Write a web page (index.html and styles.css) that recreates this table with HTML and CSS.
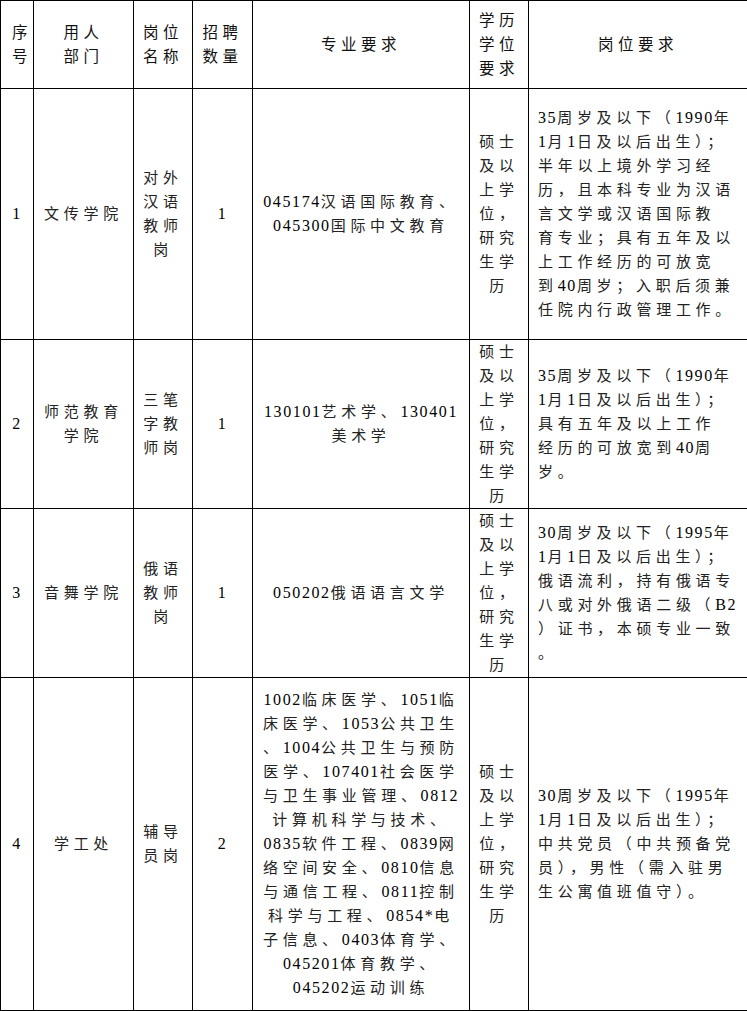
FILE: index.html
```html
<!DOCTYPE html>
<html lang="zh-CN">
<head>
<meta charset="utf-8">
<title>招聘岗位表</title>
<link rel="stylesheet" href="styles.css">
</head>
<body>
<table class="jobs">
  <colgroup>
    <col class="c-no"><col class="c-dept"><col class="c-post"><col class="c-num"><col class="c-major"><col class="c-edu"><col class="c-req">
  </colgroup>
  <thead>
    <tr class="r-head">
      <th class="th-first">序<br>号</th>
      <th>用人<br>部门</th>
      <th>岗位<br>名称</th>
      <th>招聘<br>数量</th>
      <th>专业要求</th>
      <th>学历<br>学位<br>要求</th>
      <th>岗位要求</th>
    </tr>
  </thead>
  <tbody>
    <tr class="r1">
      <td><span class="n">1</span></td>
      <td>文传学院</td>
      <td>对外<br>汉语<br>教师<br>岗</td>
      <td><span class="n">1</span></td>
      <td><span class="n">045174</span>汉语国际教育、<br><span class="n">045300</span>国际中文教育</td>
      <td>硕士<br>及以<br>上学<br>位，<br>研究<br>生学<br>历</td>
      <td class="req"><span class="n">35</span>周岁及以下（<span class="n">1990</span>年<br><span class="n">1</span>月<span class="n">1</span>日及以后出生）；<br>半年以上境外学习经<br>历，且本科专业为汉语<br>言文学或汉语国际教<br>育专业；具有五年及以<br>上工作经历的可放宽<br>到<span class="n">40</span>周岁；入职后须兼<br>任院内行政管理工作。</td>
    </tr>
    <tr class="r2">
      <td><span class="n">2</span></td>
      <td>师范教育<br>学院</td>
      <td>三笔<br>字教<br>师岗</td>
      <td><span class="n">1</span></td>
      <td><span class="n">130101</span>艺术学、<span class="n">130401</span><br>美术学</td>
      <td>硕士<br>及以<br>上学<br>位，<br>研究<br>生学<br>历</td>
      <td class="req"><span class="n">35</span>周岁及以下（<span class="n">1990</span>年<br><span class="n">1</span>月<span class="n">1</span>日及以后出生）；<br>具有五年及以上工作<br>经历的可放宽到<span class="n">40</span>周<br>岁。</td>
    </tr>
    <tr class="r3">
      <td><span class="n">3</span></td>
      <td>音舞学院</td>
      <td>俄语<br>教师<br>岗</td>
      <td><span class="n">1</span></td>
      <td><span class="n">050202</span>俄语语言文学</td>
      <td>硕士<br>及以<br>上学<br>位，<br>研究<br>生学<br>历</td>
      <td class="req"><span class="n">30</span>周岁及以下（<span class="n">1995</span>年<br><span class="n">1</span>月<span class="n">1</span>日及以后出生）；<br>俄语流利，持有俄语专<br>八或对外俄语二级（<span class="n">B2</span><br>）证书，本硕专业一致<br>。</td>
    </tr>
    <tr class="r4">
      <td><span class="n">4</span></td>
      <td>学工处</td>
      <td>辅导<br>员岗</td>
      <td><span class="n">2</span></td>
      <td><span class="n">1002</span>临床医学、<span class="n">1051</span>临<br>床医学、<span class="n">1053</span>公共卫生<br>、<span class="n">1004</span>公共卫生与预防<br>医学、<span class="n">107401</span>社会医学<br>与卫生事业管理、<span class="n">0812</span><br>计算机科学与技术、<br><span class="n">0835</span>软件工程、<span class="n">0839</span>网<br>络空间安全、<span class="n">0810</span>信息<br>与通信工程、<span class="n">0811</span>控制<br>科学与工程、<span class="n">0854*</span>电<br>子信息、<span class="n">0403</span>体育学、<br><span class="n">045201</span>体育教学、<br><span class="n">045202</span>运动训练</td>
      <td>硕士<br>及以<br>上学<br>位，<br>研究<br>生学<br>历</td>
      <td class="req"><span class="n">30</span>周岁及以下（<span class="n">1995</span>年<br><span class="n">1</span>月<span class="n">1</span>日及以后出生）；<br>中共党员（中共预备党<br>员），男性（需入驻男<br>生公寓值班值守）。</td>
    </tr>
  </tbody>
</table>
</body>
</html>
```

FILE: styles.css
```css
html, body {
  margin: 0;
  padding: 0;
  background: #ffffff;
}

.jobs {
  border-collapse: collapse;
  table-layout: fixed;
  width: 747px;
  font-family: "Liberation Serif", "Noto Sans CJK SC", serif;
  font-size: 15px;
  line-height: 24px;
  color: #222222;
}

.c-no { width: 33px; }
.c-dept { width: 100px; }
.c-post { width: 59px; }
.c-num { width: 60px; }
.c-major { width: 217px; }
.c-edu { width: 59px; }
.c-req { width: 219px; }

.jobs th,
.jobs td {
  border: 1px solid #000000;
  padding: 0;
  text-align: center;
  vertical-align: middle;
  white-space: nowrap;
  letter-spacing: 4.7px;
  font-weight: normal;
  overflow: hidden;
}

.jobs th {
  color: #111111;
  font-size: 15.5px;
  letter-spacing: 4.5px;
}

.jobs .th-first {
  padding-left: 10px;
}

.jobs .req {
  text-align: left;
  padding-left: 9px;
}

.n {
  font-family: "Liberation Serif", serif;
  font-size: 16px;
  letter-spacing: 1.6px;
  color: #000000;
}

.r-head { height: 88px; }
.r1 { height: 251px; }
.r2 { height: 169px; }
.r3 { height: 168px; }
.r4 { height: 333px; }
```
